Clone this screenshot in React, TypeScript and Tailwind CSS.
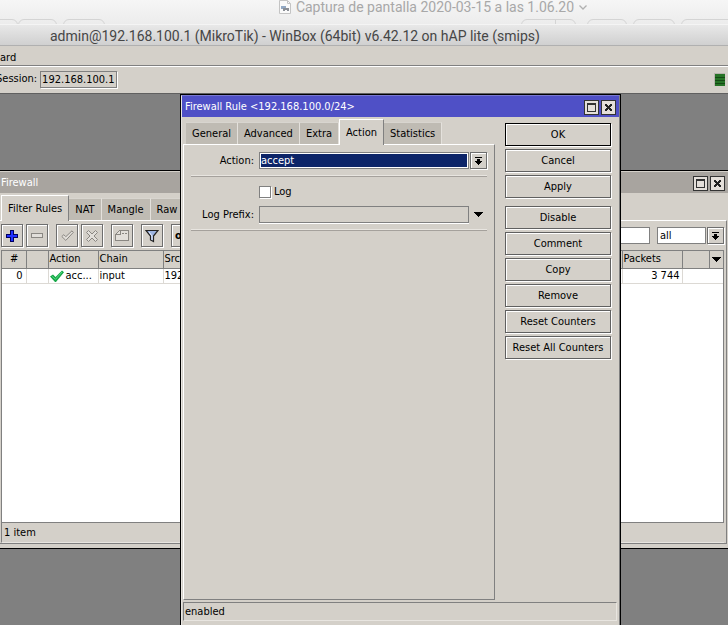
import { useState, type ReactNode } from 'react'

const bevel = 'border border-[#6e6e6e] shadow-[inset_1px_1px_0_#fff,1px_1px_0_#fff]'

function WindowControls() {
  return (
    <div className="flex gap-0.5">
      <button aria-label="Maximize" className="flex size-[15px] items-center justify-center border border-[#333] bg-[#e4dfda]">
        <svg width="9" height="9" viewBox="0 0 9 9" shapeRendering="crispEdges">
          <path d="M0 0h9v9H0zM1 2v6h7V2z" fill="#333" fillRule="evenodd" />
        </svg>
      </button>
      <button aria-label="Close" className="flex size-[15px] items-center justify-center border border-[#333] bg-[#e4dfda]">
        <svg width="7" height="7" viewBox="0 0 7 7" shapeRendering="crispEdges">
          <path d="M0 0h2v1h1v1h1V1h1V0h2v2H6v1H5v1h1v1h1v2H5V6H4V5H3v1H2v1H0V5h1V4h1V3H1V2H0z" fill="#222" />
        </svg>
      </button>
    </div>
  )
}

function DropGlyph() {
  return (
    <svg width="7" height="8" viewBox="0 0 7 8" shapeRendering="crispEdges">
      <path d="M0 0h7v1H0zM2 2h3v2h2v1H6v1H5v1H4v1H3V7H2V6H1V5H0V4h2z" fill="#000" />
    </svg>
  )
}

function Triangle() {
  return (
    <svg width="9" height="5" viewBox="0 0 9 5" shapeRendering="crispEdges">
      <path d="M0 0h9v1H8v1H7v1H6v1H5v1H4V4H3V3H2V2H1V1H0z" fill="#000" />
    </svg>
  )
}

function ToolButton({ label, gap, children }: { label: string; gap?: boolean; children: ReactNode }) {
  return (
    <button aria-label={label} className={`flex h-[23px] w-[22px] shrink-0 items-center justify-center ${bevel} ${gap ? 'ml-[5px]' : ''}`}>
      {children}
    </button>
  )
}

function Rule() {
  return <div className="h-0.5 border-t border-[#e8e5e0] bg-[#a5a19c]" />
}

function Tab({ name, active, onSelect }: { name: string; active: boolean; onSelect: () => void }) {
  return (
    <button
      role="tab"
      aria-selected={active}
      onClick={onSelect}
      className={
        active
          ? 'relative -mb-px h-[26px] shrink-0 border-t border-r border-l border-t-white border-r-[#808080] border-l-white bg-[#d4d0c9] px-1.5'
          : 'h-[22px] shrink-0 border-t border-r border-t-[#d8d5cf] border-r-[#e4e1dc] bg-[#bfbbb3] px-1.5'
      }
    >
      {name}
    </button>
  )
}

const ruleTabs = ['General', 'Advanced', 'Extra', 'Action', 'Statistics']
const firewallTabs = ['Filter Rules', 'NAT', 'Mangle', 'Raw']

function FirewallWindow() {
  const [tab, setTab] = useState('Filter Rules')
  return (
    <section className="absolute top-[76px] right-0 -left-1 flex h-[379px] flex-col border-y border-black bg-[#d4d0c9] pl-1">
      <header className="mt-px flex h-[21px] shrink-0 items-center justify-between bg-[#a8a49f] pt-px pr-[3px] pl-px text-white">
        <h2>Firewall</h2>
        <WindowControls />
      </header>
      <div role="tablist" className="mt-px flex h-[26px] shrink-0 items-end pl-px">
        {firewallTabs.map((t) => (
          <Tab key={t} name={t} active={t === tab} onSelect={() => setTab(t)} />
        ))}
      </div>
      <div className="mr-px mb-1 flex min-h-0 flex-1 flex-col border-t border-r border-b border-t-white border-r-[#808080] border-b-[#808080] pr-0.5 pl-px">
        <div className="flex h-[29px] shrink-0 items-center justify-between">
          <div className="flex gap-[3px]">
            <ToolButton label="Add">
              <svg width="12" height="12" viewBox="0 0 12 12" shapeRendering="crispEdges">
                <path d="M4 0h4v4h4v4H8v4H4V8H0V4h4z" fill="#000060" />
                <path d="M5 1h2v4h4v2H7v4H5V7H1V5h4z" fill="#2030ff" />
              </svg>
            </ToolButton>
            <ToolButton label="Remove">
              <svg width="12" height="5" viewBox="0 0 12 5" shapeRendering="crispEdges">
                <path d="M.5.5h11v4H.5z" fill="#e2dfda" stroke="#8a8782" />
              </svg>
            </ToolButton>
            <ToolButton label="Enable" gap>
              <svg width="13" height="12" viewBox="0 0 13 12">
                <path d="M.8 6.500l2-1.800 2 2L11 .8l1.300 1.600-7.500 8z" fill="#e2dfda" stroke="#8a8782" />
              </svg>
            </ToolButton>
            <ToolButton label="Disable">
              <svg width="12" height="12" viewBox="0 0 12 12">
                <path d="M.5 2.500l2-2L6 4 9.500.5l2 2L8 6l3.500 3.500-2 2L6 8l-3.500 3.500-2-2L4 6z" fill="#e2dfda" stroke="#8a8782" />
              </svg>
            </ToolButton>
            <ToolButton label="Comment" gap>
              <svg width="14" height="11" viewBox="0 0 14 11" shapeRendering="crispEdges">
                <path d="M.5 4.500l4-4h9v10H.5z" fill="#e2dfda" stroke="#8a8782" />
                <path d="M1 4.500h4v-4M7 3.500h2M10 3.500h2" fill="none" stroke="#8a8782" />
              </svg>
            </ToolButton>
            <ToolButton label="Filter" gap>
              <svg width="14" height="14" viewBox="0 0 14 14">
                <path d="M1 1.500h12L8.500 7v5.500l-3-1.500V7z" fill="#9db4e0" stroke="#222" strokeWidth="1.2" />
                <path d="M4 3l3 4v4" fill="none" stroke="#e8efff" />
              </svg>
            </ToolButton>
            <button className={`ml-[5px] h-[23px] w-[120px] pl-[3px] text-left whitespace-nowrap ${bevel}`}>
              <b>oo</b> Reset Counters
            </button>
          </div>
          <div className="flex h-[17px]">
            <input aria-label="Find" className="mr-[7px] w-20 border border-[#808080] bg-white px-1" />
            <select aria-label="Chain filter" className="w-[49px] appearance-none border border-[#808080] bg-white pl-0.5">
              <option>all</option>
            </select>
            <button aria-label="Open chain list" className={`ml-px flex w-[17px] items-center justify-center ${bevel}`}>
              <DropGlyph />
            </button>
          </div>
        </div>
        <div className="min-h-0 flex-1 border border-[#808080] bg-white">
          <table className="w-full table-fixed border-collapse text-left">
            <colgroup>
              <col className="w-6" />
              <col className="w-[22px]" />
              <col className="w-[50px]" />
              <col className="w-[65px]" />
              <col />
              <col className="w-[60px]" />
              <col className="w-[27px]" />
              <col className="w-3.5" />
            </colgroup>
            <thead>
              <tr className="h-[17px] bg-[#d4d0c9] *:border-r *:border-b *:border-[#808080] *:p-0 *:pl-px *:font-normal">
                <th className="text-center">#</th>
                <th />
                <th>Action</th>
                <th>Chain</th>
                <th>Src. Address</th>
                <th>Packets</th>
                <th />
                <th className="border-r-0!">
                  <button aria-label="Columns" className="flex w-full justify-center"><Triangle /></button>
                </th>
              </tr>
            </thead>
            <tbody>
              <tr className="h-[15px] *:border-r *:border-b *:border-[#dcd9d4] *:p-0 *:pl-px">
                <td className="pr-[3px]! text-right">0</td>
                <td />
                <td className="overflow-hidden">
                  <span className="flex items-center gap-0.5 whitespace-nowrap">
                    <svg width="14" height="12" viewBox="0 0 14 12" className="shrink-0">
                      <path d="M0 6.500l3-2 2.500 2.500L12 .5l2 1.800L6 12H5z" fill="#18a848" />
                      <path d="M2 6.300l3.500 3L12 2" fill="none" stroke="#55dc85" />
                    </svg>
                    acc...
                  </span>
                </td>
                <td>input</td>
                <td>192.168.100.0/24</td>
                <td className="pr-0.5! text-right">3 744</td>
                <td className="border-r-0!" />
                <td className="border-r-0!" />
              </tr>
            </tbody>
          </table>
        </div>
        <footer className="flex h-5 shrink-0 items-center border-b border-l border-b-[#e8e5e0] border-l-[#808080] pl-0.5">1 item</footer>
      </div>
    </section>
  )
}

function SideButton({ children, primary }: { children: ReactNode; primary?: boolean }) {
  return (
    <button
      className={`h-[23px] border shadow-[inset_1px_1px_0_#fff,1px_1px_0_#fff] ${primary ? 'border-black' : 'border-[#606060]'}`}
    >
      {children}
    </button>
  )
}

function RuleDialog() {
  const [tab, setTab] = useState('Action')
  return (
    <section
      role="dialog"
      aria-labelledby="rule-title"
      className="absolute top-0 -bottom-0.5 left-[180px] flex w-[441px] flex-col border border-black bg-[#d4d0c9]"
    >
      <div className="flex min-h-0 flex-1 flex-col border border-t-[#7878d0] border-r-[#808080] border-b-[#808080] border-l-[#e8e5e0]">
        <header className="flex h-[21px] shrink-0 items-center justify-between bg-[#4f50c6] pt-px pr-[3px] pl-[3px] text-white">
          <h2 id="rule-title">Firewall Rule &lt;192.168.100.0/24&gt;</h2>
          <WindowControls />
        </header>
        <div className="flex min-h-0 flex-1">
          <div className="ml-px flex w-[312px] flex-col pt-0.5">
            <div role="tablist" className="flex h-[25px] shrink-0 items-end pl-[3px]">
              {ruleTabs.map((t) => (
                <Tab key={t} name={t} active={t === tab} onSelect={() => setTab(t)} />
              ))}
            </div>
            <div className="flex flex-1 flex-col border border-t-white border-r-[#808080] border-b-[#808080] border-l-white px-[7px] pt-[7px]">
              <div className="flex h-[17px] items-center">
                <label htmlFor="action" className="w-[68px] shrink-0 pr-[5px] text-right">Action:</label>
                <select id="action" className="h-[17px] min-w-0 flex-1 appearance-none border border-[#808080] bg-[#0c2468] pl-px text-white shadow-[inset_0_0_0_1px_#fff]">
                  <option>accept</option>
                </select>
                <button aria-label="Open action list" className={`ml-px flex h-[17px] w-[17px] items-center justify-center ${bevel}`}>
                  <DropGlyph />
                </button>
              </div>
              <div className="mt-1.5"><Rule /></div>
              <label className="mt-[9px] ml-[68px] flex h-3 items-center gap-[3px]">
                <input type="checkbox" className="size-3 appearance-none border border-[#808080] bg-white shadow-[1px_1px_0_#fff] checked:bg-black" />
                Log
              </label>
              <div className="mt-2 flex h-[17px] items-center">
                <label htmlFor="prefix" className="w-[68px] shrink-0 pr-[5px] text-right whitespace-nowrap">Log Prefix:</label>
                <input id="prefix" className="h-[17px] min-w-0 flex-1 border border-[#808080] px-1 shadow-[0_1px_0_#fff]" />
                <button aria-label="Open prefix list" className="ml-px flex w-[17px] justify-center"><Triangle /></button>
              </div>
              <div className="mt-1.5"><Rule /></div>
            </div>
          </div>
          <div className="flex flex-1 flex-col gap-[3px] pt-1.5 pr-2 pl-2.5">
            <SideButton primary>OK</SideButton>
            <SideButton>Cancel</SideButton>
            <SideButton>Apply</SideButton>
            <div className="h-0.5" />
            <SideButton>Disable</SideButton>
            <SideButton>Comment</SideButton>
            <SideButton>Copy</SideButton>
            <SideButton>Remove</SideButton>
            <SideButton>Reset Counters</SideButton>
            <SideButton>Reset All Counters</SideButton>
          </div>
        </div>
        <footer className="mt-0.5 mr-0.5 mb-1 ml-px flex h-[19px] shrink-0 items-center border border-t-[#808080] border-r-[#e8e5e0] border-b-[#e8e5e0] border-l-[#808080] pl-px">
          enabled
        </footer>
      </div>
    </section>
  )
}

export default function App() {
  return (
    <div className="flex h-screen flex-col overflow-hidden bg-[#808080] font-['DejaVu_Sans_Condensed','DejaVu_Sans',sans-serif] text-[11px] leading-[14px] text-black">
      <div className="relative flex h-6 shrink-0 justify-center overflow-hidden bg-linear-to-b from-[#f6f6f6] to-[#ececec] pl-[138px] font-[Roboto,sans-serif] text-[14px] text-[#a8a8a8]">
        <div className="flex h-3.5 items-center gap-[5px] whitespace-nowrap">
          <svg width="12" height="14" viewBox="0 0 12 14">
            <path d="M.5.5h8l3 3v10H.5z" fill="#fafafa" stroke="#c4c4c4" />
            <path d="M8.500.5v3h3" fill="none" stroke="#c4c4c4" />
            <path d="M2 6h5v3H2z" fill="#93a9c4" />
            <path d="M4 8h6v3H8v-1H6v1H4z" fill="#8b8f96" />
          </svg>
          <span>Captura de pantalla 2020-03-15 a las 1.06.20</span>
          <svg width="8" height="5" viewBox="0 0 8 5"><path d="M.5.5L4 4 7.500.5" fill="none" stroke="#b0b0b0" strokeWidth="1.300" /></svg>
        </div>
        <div className="absolute inset-x-0 top-[19px] flex">
          <i className="-ml-2 h-6 w-[26px] rounded-md border border-[#d4d4d4]" />
          <i className="h-6 w-[39px] rounded-md border border-[#d4d4d4]" />
          <i className="ml-1.5 h-6 w-[42px] rounded-md border border-[#d4d4d4]" />
          <i className="ml-auto flex h-6 w-[55px] rounded-md border border-[#d4d4d4]"><b className="ml-[33px] w-px bg-[#d4d4d4]" /></i>
          <i className="ml-[11px] h-6 w-10 rounded-md border border-[#d4d4d4]" />
          <i className="ml-1.5 h-6 w-[42px] rounded-md border border-[#d4d4d4]" />
          <i className="-mr-2 ml-1.5 h-6 w-[55px] rounded-md border border-[#d4d4d4]" />
        </div>
      </div>
      <div className="flex h-[22px] shrink-0 items-center border-t border-b border-t-[#f4f4f4] border-b-[#b0b0b0] bg-linear-to-b from-[#e8e8e8] to-[#d0d0d0] pt-px pl-[50px] font-[Roboto,sans-serif] text-[14px] whitespace-nowrap text-[#464646]">
        <h1>admin@192.168.100.1 (MikroTik) - WinBox (64bit) v6.42.12 on hAP lite (smips)</h1>
      </div>
      <nav className="flex h-5 shrink-0 items-center border-b border-[#808080] bg-[#d4d0c9] pt-1">
        <button>ard</button>
      </nav>
      <div className="flex h-7 shrink-0 items-center justify-between border-t border-b border-t-white border-b-[#606060] bg-[#d4d0c9] pr-[3px]">
        <div className="-mt-0.5 -ml-1 flex items-center gap-[3px]">
          <label htmlFor="session">Session:</label>
          <input id="session" readOnly defaultValue="192.168.100.1" className="h-[17px] w-[77px] border border-[#808080] px-px shadow-[1px_1px_0_#fff]" />
        </div>
        <svg width="11" height="13" viewBox="0 0 11 13" shapeRendering="crispEdges" className="-mt-0.5">
          <path d="M0 0h11v13H0z" fill="#b8b5ae" />
          <path d="M1 1h10v12H1z" fill="#267326" />
          <path d="M1 4h10M1 7h10M1 10h10" stroke="#144a14" />
        </svg>
      </div>
      <main className="relative min-h-0 flex-1 overflow-hidden">
        <FirewallWindow />
        <RuleDialog />
      </main>
    </div>
  )
}
